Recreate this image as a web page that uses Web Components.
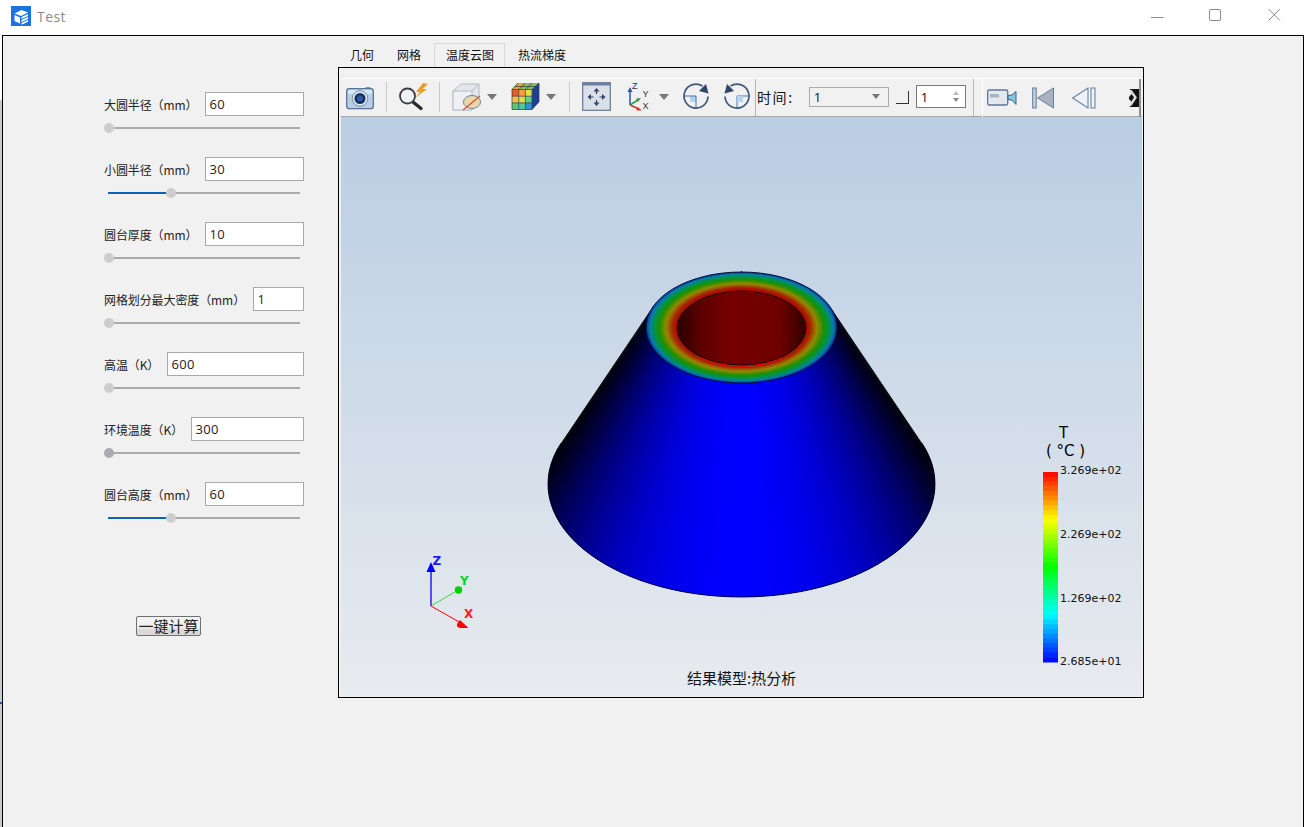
<!DOCTYPE html>
<html lang="zh"><head><meta charset="utf-8"><title>Test</title>
<style>html,body{margin:0;padding:0;background:#fff;height:827px;overflow:hidden;font-family:"Noto Sans CJK SC","Noto Sans",sans-serif}</style>
</head><body>
<x-app>
  <x-titlebar slot="title">Test</x-titlebar>
  <x-side slot="side">
    <x-param label="大圆半径（mm）" value="60" pos="0"></x-param>
    <x-param label="小圆半径（mm）" value="30" pos="58"></x-param>
    <x-param label="圆台厚度（mm）" value="10" pos="0"></x-param>
    <x-param label="网格划分最大密度（mm）" value="1" pos="0"></x-param>
    <x-param label="高温（K）" value="600" pos="0"></x-param>
    <x-param label="环境温度（K）" value="300" pos="0" active></x-param>
    <x-param label="圆台高度（mm）" value="60" pos="58"></x-param>
    <x-button>一键计算</x-button>
  </x-side>
  <x-tabs slot="main">
    <x-toolbar></x-toolbar>
    <x-viewport></x-viewport>
  </x-tabs>
</x-app>
<script>
const def=(n,html,init)=>customElements.define(n,class extends HTMLElement{
  connectedCallback(){ if(this.shadowRoot) return; const r=this.attachShadow({mode:'open'}); r.innerHTML=typeof html==='function'?html(this):html; init&&init(r,this);}
});
def('x-app',`<style>:host{display:flex;flex-direction:column;width:1304px;height:827px;overflow:hidden;background:linear-gradient(#fff 0 100px,#c6cacf 100px 702px,#1a5fa0 702px 704px,#c6cacf 704px) 0 0/2px 100% no-repeat}
.win{flex:1;display:flex;margin-left:2px;border:1px solid #000;border-bottom:0;background:#f1f1f1;min-height:0}
</style><slot name="title"></slot><div class="win"><slot name="side"></slot><slot name="main"></slot></div>`);
def('x-titlebar',`<style>:host{display:flex;align-items:center;height:35px;flex:none;background:#fff;font:14px "Open Sans","Noto Sans",sans-serif;color:#8b8b8b;letter-spacing:.45px}
.ic{margin:-3px 0 0 11px;width:20px;height:20px;flex:none}
.t{margin:-3px 0 0 6px;flex:1}
.b{display:flex;margin-top:-5px}
.b svg{height:14px;display:block;flex:none}
</style>
<svg class="ic" viewBox="0 0 20 20"><rect width="20" height="20" fill="#1b72e0"/><path d="M3.500 7.500 10.500 4l6.500 2.500-7 3.500zM3.500 9l5.500 2.500V17.500L3.500 15zM10.500 11 17 8v2l-6.500 3zM10.500 14 17 11v2l-6.500 3zM10.500 17 17 14v1.800l-6.500 3z" fill="#fff"/></svg>
<div class="t"><slot></slot></div>
<div class="b">
<svg width="58" height="14" viewBox="0 0 58 14"><path d="M0 9.500h12.500" stroke="#8b8b8b"/></svg>
<svg width="59" height="14" viewBox="0 0 59 14"><rect x=".5" y="1.500" width="11" height="11" rx="1.500" fill="none" stroke="#8b8b8b"/></svg>
<svg width="36" height="14" viewBox="0 0 36 14"><path d="M.5 1 12 12.500M12 1 .5 12.500" stroke="#8b8b8b" fill="none"/></svg>
</div>`);
def('x-side',`<style>:host{display:block;flex:none;width:234px;padding:56px 0 0 101px;font:12px "Noto Sans CJK SC","Noto Sans",sans-serif;color:#222}</style><slot></slot>`);
def('x-param',h=>{const p=+h.getAttribute('pos');const act=h.hasAttribute('active');
return `<style>:host{display:block;height:65px;width:200px}
.r{display:flex;align-items:center;height:24px;justify-content:space-between}
.l{white-space:nowrap;letter-spacing:-.1px}
.v{flex:none;box-sizing:border-box;height:24px;border:1px solid #a9a9a9;background:#fff;padding:0 3px 0 3.500px;font:13px/22px "Open Sans","Noto Sans",sans-serif;color:#222;letter-spacing:.3px}
.s{position:relative;margin:11px 4px 0 4px;height:2px;background:#aaa}
.f{height:2px;background:#0a63b5}
.k{position:absolute;top:-4px;width:10px;height:10px;border-radius:50%}
</style><div class="r"><span class="l">${h.getAttribute('label')}</span><span class="v" style="width:${{'1':51,'600':137,'300':113}[h.getAttribute('value')]||99}px">${h.getAttribute('value')}</span></div>
<div class="s"><div class="f" style="width:${p}px"></div><div class="k" style="left:${p?p:-4}px;background:${act?'#a9adb1':'#cdcdcd'}"></div></div>`});
def('x-button',`<style>:host{display:block;box-sizing:border-box;width:65px;height:20px;margin:69px 0 0 32px;border:1px solid #707070;border-radius:2px;background:linear-gradient(#f2f2f2 50%,#d9d9d9 75%);font:15px/17px "Noto Sans CJK SC",sans-serif;color:#222;text-align:center}</style><slot></slot>`);
def('x-tabs',`<style>:host{display:block;flex:none;width:806px;margin-top:7px;font:12px "Noto Sans CJK SC",sans-serif;color:#111}
.bar{display:flex;height:24px}
.t{box-sizing:border-box;padding:3px 12px 0;height:24px;white-space:nowrap;line-height:18px}
.t.on{border:1px solid #d9d9d9;border-bottom:0;padding:2px 11px 0;margin:0 1px 0 0;width:71px;background:#f1f1f1}
.p{box-sizing:border-box;height:631px;border:1px solid #000;padding:0 1px 0 2px;display:flex;flex-direction:column}
</style><div class="bar"><div class="t" style="width:47px">几何</div><div class="t" style="width:49px">网格</div><div class="t on">温度云图</div><div class="t">热流梯度</div></div>
<div class="p"><slot></slot></div>`);
def('x-toolbar',`<style>:host{display:block;flex:none;box-sizing:border-box;height:49px;padding-top:10px;font:14px "Noto Sans CJK SC",sans-serif;color:#111}
.w{display:flex;align-items:center;box-sizing:border-box;height:39px;padding-bottom:2px;border-top:1px solid #fff;border-bottom:1px solid #a4a4a4}
svg{display:block;flex:none}
.sep{flex:none;width:1px;height:30px;background:#c9c9c9}
.arr{flex:none;width:0;height:0;border:5px solid transparent;border-top:6px solid #777;border-bottom:0}
.t{flex:none;white-space:nowrap;margin-left:1px;letter-spacing:1.600px}
.c{flex:none;box-sizing:border-box;width:80px;height:20px;border:1px solid #a9a9a9;display:flex;align-items:center;justify-content:space-between;padding:0 8px 0 4px;font:13px "Open Sans",sans-serif}
.c i{width:0;height:0;border:4px solid transparent;border-top:5px solid #777;border-bottom:0}
.chk{flex:none;width:12px;height:12px;border-right:1px solid #333;border-bottom:1px solid #333}
.sp{flex:none;box-sizing:border-box;width:50px;height:23px;border:1px solid #7a7a7a;background:#fff;display:flex;align-items:center;justify-content:space-between;padding:0 6px 0 4px;font:13px "Open Sans",sans-serif}
.sp span{display:flex;flex-direction:column;gap:3px}
.sp i{display:block;width:0;height:0;border:3px solid transparent}
.sp i.u{border-bottom:4px solid #bbb;border-top:0}.sp i.d{border-top:4px solid #888;border-bottom:0}
.g2{flex:none;box-sizing:border-box;width:159px;margin-left:8px;height:38px;margin-top:2px;display:flex;align-items:center;border-right:2px solid #8e8e8e;border-left:1px solid #fff;overflow:hidden}
.vd{flex:none;width:1px;height:37px;margin-top:2px;background:#b5b5b5}
</style><div class="w">
<svg style="margin-left:5px" width="28" height="26" viewBox="0 0 28 26"><path d="M19 5l1-2h4l1 2z" fill="#7a93b4"/><rect x=".7" y="4.700" width="26.600" height="20" rx="2.500" fill="#b9cfe6" stroke="#56749b" stroke-width="1.300"/><rect x="2" y="6" width="24" height="4" fill="#d9e6f3"/><circle cx="14" cy="14.500" r="7.800" fill="#dfe9f4" stroke="#6f8db0"/><circle cx="14" cy="14.500" r="5.500" fill="#16305f"/><circle cx="14" cy="14.500" r="3" fill="#2d5aa0"/></svg>
<div class="sep" style="margin-left:12px"></div>
<svg style="margin-left:12px" width="30" height="28" viewBox="0 0 30 28"><path d="M24 0 17 9h4l-5 6 12-9h-4.500L29 1z" fill="#ef9a25"/><path d="M14 19l8 6.500" stroke="#2a2a2a" stroke-width="3.400" stroke-linecap="round"/><circle cx="8.500" cy="13" r="7.500" fill="#eef2f6" stroke="#3d3d3d" stroke-width="1.800"/></svg>
<div class="sep" style="margin-left:10px"></div>
<svg style="margin-left:12px" width="30" height="30" viewBox="0 0 30 30"><path d="M1 9 9 2h18v19l-7 7H1z" fill="#e2e6eb" stroke="#b4bcc8"/><path d="M1 9h19v19H1z" fill="#eef0f3" stroke="#b4bcc8"/><path d="M20 9l7-7" stroke="#b4bcc8"/><ellipse cx="20" cy="20" rx="8.500" ry="6.500" fill="#e9d7a9" stroke="#6c86a6"/><path d="M11 28 28 14" stroke="#d9502a" stroke-width="1.200"/></svg>
<div class="arr" style="margin-left:5px"></div>
<svg style="margin-left:14px" width="29" height="29" viewBox="0 0 29 29"><path d="M7 1h21l-7 6.500H1z" fill="#7fbf6a"/><path d="M7 1h7l-5 6.500H1z" fill="#e9a23c"/><path d="M21 7.500 28 1v19l-7 7.500z" fill="#1d3f9c"/><rect x="1" y="7.500" width="6.700" height="6.700" fill="#e8583a"/><rect x="7.700" y="7.500" width="6.700" height="6.700" fill="#f4a03a"/><rect x="14.400" y="7.500" width="6.700" height="6.700" fill="#e0e050"/><rect x="1" y="14.200" width="6.700" height="6.700" fill="#f2c23c"/><rect x="7.700" y="14.200" width="6.700" height="6.700" fill="#d8e050"/><rect x="14.400" y="14.200" width="6.700" height="6.700" fill="#60d090"/><rect x="1" y="20.900" width="6.700" height="6.700" fill="#58c878"/><rect x="7.700" y="20.900" width="6.700" height="6.700" fill="#50c8a0"/><rect x="14.400" y="20.900" width="6.700" height="6.700" fill="#3090e0"/><path d="M1 7.500h20v20H1zM7.700 7.500v20M14.400 7.500v20M1 14.200h20M1 20.900h20M7 1 1 7.500M14 1 8 7.500M21 1l-6 6.500M4 4.500h21M21 7.500 28 1v19l-7 7.500" fill="none" stroke="#333" stroke-width=".7"/></svg>
<div class="arr" style="margin-left:6px"></div>
<div class="sep" style="margin-left:13px"></div>
<svg style="margin-left:12px" width="29" height="29" viewBox="0 0 29 29"><rect x=".7" y=".7" width="27.600" height="27.600" fill="#dbdfe8" stroke="#6a80a0" stroke-width="1.300"/><rect x="1" y="1" width="27" height="2.500" fill="#6a80a0"/><g fill="none" stroke="#2c3e5c" stroke-width="1.200"><path d="M14.500 9v3M14.500 18v3M8.500 15h3M17.500 15h3"/></g><path d="M14.500 6l-3 3.500h6zM14.500 24l-3-3.500h6zM5.500 15l3.500-3v6zM23.500 15l-3.500-3v6z" fill="#2f4668"/></svg>
<svg style="margin-left:16px" width="30" height="30" viewBox="0 0 30 30"><path d="M3 23V9" stroke="#2a55b0" stroke-width="1.500"/><path d="M3 5 .5 10h5z" fill="#2a55b0"/><path d="M3 23l8-5" stroke="#2f9a4a" stroke-width="1.500"/><path d="M14 16l-5 .5 2 3.500z" fill="#2f9a4a"/><path d="M3 23l9 4" stroke="#d8342a" stroke-width="1.500"/><path d="M15 28.500l-4.500-3.500-1 3.500z" fill="#d8342a"/><text x="5" y="7" font-size="9" font-family="Liberation Sans" fill="#333">Z</text><text x="15.500" y="15" font-size="9" font-family="Liberation Sans" fill="#333">Y</text><text x="15.500" y="27" font-size="9" font-family="Liberation Sans" fill="#333">X</text></svg>
<div class="arr" style="margin-left:2px"></div>
<svg style="margin-left:14px" width="26" height="28" viewBox="0 0 26 28"><rect x="7" y="13" width="6" height="6" fill="#b6d3ee"/><path d="M1 13H13V25" stroke="#3d74b5" fill="none"/><path d="M19.500 3A12 12 0 1 0 25 13.500" fill="none" stroke="#3f5878" stroke-width="1.700"/><path d="M25.500 10.500 16 8l7-7z" fill="#2f4668"/></svg>
<svg style="margin-left:15px" width="26" height="28" viewBox="0 0 26 28"><g transform="matrix(-1 0 0 1 26 0)"><path d="M1 13H13V25" stroke="#3d74b5" fill="none"/><rect x="7" y="13" width="6" height="6" fill="#b6d3ee"/><path d="M19.500 3A12 12 0 1 0 25 13.500" fill="none" stroke="#3f5878" stroke-width="1.700"/><path d="M25.500 10.500 16 8l7-7z" fill="#2f4668"/></g></svg>
<div class="vd" style="margin-left:5px"></div>
<div class="t">时间:</div>
<div class="c" style="margin-left:15px"><span>1</span><i></i></div>
<div class="chk" style="margin-left:7px;margin-top:2px"></div>
<div class="sp" style="margin-left:7px"><span style="display:block">1</span><span><i class="u"></i><i class="d"></i></span></div>
<div class="vd" style="margin-left:7px"></div>
<div class="g2">
<svg style="margin-left:4px" width="30" height="20" viewBox="0 0 30 20"><rect x=".7" y="2" width="20" height="15" rx="1.500" fill="#e3e8ee" stroke="#5d7696" stroke-width="1.300"/><rect x="3" y="6" width="9" height="3.500" fill="#a9b4c2"/><path d="M21 7.500 25 7l4-3.500v13L25 12l-4-.5z" fill="#7fc8e4" stroke="#3f5f88"/></svg>
<svg style="margin-left:15px" width="22" height="22" viewBox="0 0 22 22"><rect x=".7" y="1" width="3.500" height="20" fill="#c8d0da" stroke="#5f7898"/><path d="M21.500 1v20L5.500 11z" fill="#a9b3bf" stroke="#6a7f9a"/></svg>
<svg style="margin-left:18px" width="24" height="22" viewBox="0 0 24 22"><path d="M16 1v20L.7 11z" fill="#f0f2f5" stroke="#6a85a6" stroke-width="1.100"/><rect x="19" y="1" width="4" height="20" fill="#eef1f5" stroke="#6a85a6" stroke-width="1.100"/></svg>
<svg style="margin-left:31px" width="13" height="18" viewBox="0 0 12 18"><rect x="1.500" width="10.500" height="18" fill="#111"/><path d="M0 0h2l3 3-3 5z" fill="#f1f1f1"/><path d="M0 18h2l3-3-3-5z" fill="#f1f1f1"/><path d="M3 1.500 8 8.500 3 16" fill="none" stroke="#dcdcdc" stroke-width="2.400"/></svg>
</div></div>`);
def('x-viewport',`<style>:host{display:block;flex:1;position:relative;min-height:0;background:linear-gradient(#b9cde3,#e8ebef);overflow:hidden}
svg{display:block;position:absolute;left:0;top:0;width:801px;height:580px}
.cap{font:15px "Noto Sans CJK SC",sans-serif;fill:#111}
.lab{font:11px "DejaVu Sans",sans-serif;fill:#111}
.tt{font:15px "DejaVu Sans",sans-serif;fill:#000}
.ax{font:bold 12px "DejaVu Sans",sans-serif}
</style>
<svg viewBox="341 117 801 580">
<defs>
<radialGradient id="ring" gradientUnits="userSpaceOnUse" cx="0" cy="0" r="1" gradientTransform="translate(741.500 327.500) scale(95.500 55.500)">
<stop offset=".67" stop-color="#b40000"/><stop offset=".72" stop-color="#a62400"/><stop offset=".79" stop-color="#958800"/><stop offset=".86" stop-color="#1f9000"/><stop offset=".91" stop-color="#009440"/><stop offset=".96" stop-color="#0a7fa0"/><stop offset="1" stop-color="#0030c0"/></radialGradient>
<linearGradient id="hole" gradientUnits="userSpaceOnUse" x1="677" x2="806" y1="0" y2="0"><stop offset="0" stop-color="#280000"/><stop offset=".18" stop-color="#5a0000"/><stop offset=".4" stop-color="#760000"/><stop offset=".8" stop-color="#6e0000"/><stop offset="1" stop-color="#300000"/></linearGradient>
</defs>
<g id="fan"></g>
<ellipse cx="741.500" cy="327.500" rx="95.500" ry="55.500" fill="url(#ring)" stroke="#000820" stroke-width=".9"/>
<path d="M741.500 271v2" stroke="#000" stroke-width="1"/>
<path d="M701.500 358A64.500 37 0 0 0 781.500 358" fill="none" stroke="#f00000" stroke-width="1.600"/>
<ellipse cx="741.500" cy="328" rx="64.500" ry="37" fill="url(#hole)" stroke="#111" stroke-width="1"/>
<path d="M431 606V570" stroke="#0000ff" stroke-width="1.300"/><path d="M431 562l-4.500 10h9z" fill="#0000ff"/>
<path d="M431 606l27-16" stroke="#00e000" stroke-width="1" stroke-dasharray="2 .5"/><circle cx="458.500" cy="590" r="3.700" fill="#00d000"/>
<path d="M431 606l30 17" stroke="#ff0000" stroke-width="1"/><path d="M460 620l8.500 8h-8.500a3.500 3.500 0 0 1-3-4z" fill="#ff0000"/>
<text class="ax" x="432.500" y="565" fill="#1a1aff">Z</text><text class="ax" x="460" y="585" fill="#00d820">Y</text><text class="ax" x="464" y="618" fill="#ff1a1a">X</text>
<g id="bar"></g>
<text class="tt" x="1059" y="438">T</text><text class="tt" x="1046" y="456">( °C )</text>
<text class="lab" x="1060" y="474">3.269e+02</text><text class="lab" x="1060" y="538">2.269e+02</text><text class="lab" x="1060" y="602">1.269e+02</text><text class="lab" x="1060" y="665">2.685e+01</text>
<text class="cap" x="687" y="684">结果模型:热分析</text>
</svg>`,(r)=>{
 const NS='http://www.w3.org/2000/svg';
 const fan=r.getElementById('fan');const cx=741.5,tc=327.5,bc=484,trx=95.5,try_=55.5,brx=193.5,bry=113;
 const tm=111.3*Math.PI/180,N=180,st=2*tm/N;
 const P=(t,c,a,b)=>[cx+a*Math.sin(t),c+b*Math.cos(t)];
 for(let i=0;i<N;i++){
  const a=-tm+st*i,b=Math.min(tm,a+st*2),m=a+st/2;
  const p=[P(a,tc,trx,try_),P(b,tc,trx,try_),P(b,bc,brx,bry),P(a,bc,brx,bry)];
  const I=Math.pow(Math.max(0,Math.cos(m*90/105)),1.6);
  const e=document.createElementNS(NS,'polygon');
  e.setAttribute('points',p.map(q=>q.join(',')).join(' '));e.setAttribute('fill',`rgb(0,0,${Math.round(10+245*I)})`);fan.appendChild(e);
 }
 const be=document.createElementNS(NS,'path');
 const lx=cx-brx*Math.sin(tm),ly=bc+bry*Math.cos(tm),rx=cx+brx*Math.sin(tm);
 be.setAttribute('d',`M${lx} ${ly}A${brx} ${bry} 0 1 0 ${rx} ${ly}`);be.setAttribute('fill','none');be.setAttribute('stroke','#000020');be.setAttribute('stroke-width','.9');fan.appendChild(be);
 const bar=r.getElementById('bar');const H=190,B=40;
 for(let i=0;i<B;i++){const f=(i+.5)/B;let c;
  if(f<.25)c=[255,Math.round(255*f/.25),0];else if(f<.5)c=[Math.round(255*(1-(f-.25)/.25)),255,0];else if(f<.75)c=[0,255,Math.round(255*(f-.5)/.25)];else c=[0,Math.round(255*(1-(f-.75)/.25)),255];
  const e=document.createElementNS(NS,'rect');e.setAttribute('x',1043);e.setAttribute('width',15);e.setAttribute('y',472+H*i/B);e.setAttribute('height',H/B+.5);e.setAttribute('fill',`rgb(${c})`);bar.appendChild(e);}
});
</script>
</body></html>
